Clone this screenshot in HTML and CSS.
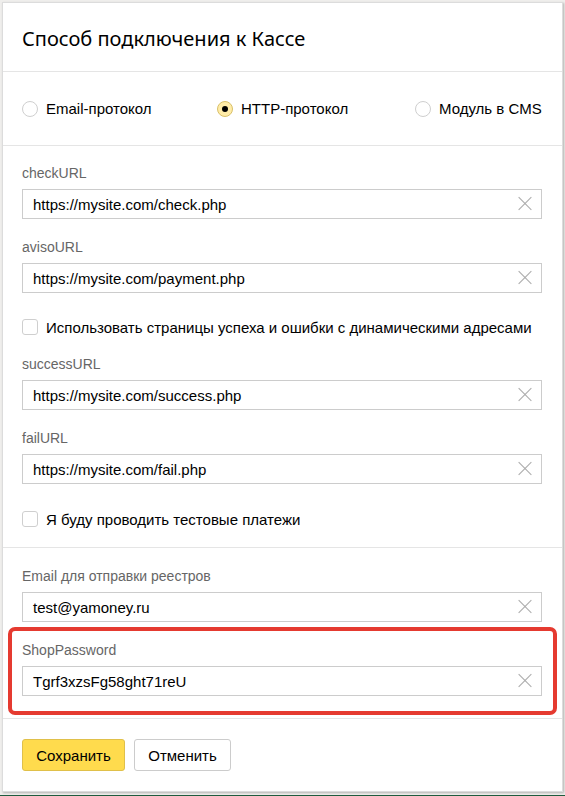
FILE: index.html
```html
<!DOCTYPE html>
<html lang="ru">
<head>
<meta charset="utf-8">
<title>Способ подключения к Кассе</title>
<link rel="stylesheet" href="styles.css">
</head>
<body>
<div class="panel">
  <div class="head"><h1 class="title">Способ подключения к Кассе</h1></div>
  <div class="radios">
    <label class="radio"><span class="rbox"></span>Email-протокол</label>
    <label class="radio"><span class="rbox on"></span>HTTP-протокол</label>
    <label class="radio"><span class="rbox"></span>Модуль в CMS</label>
  </div>
  <div class="sec sec2">
    <div class="field">
      <div class="lbl">checkURL</div>
      <div class="inp"><span class="val">https://mysite.com/check.php</span><span class="clr"></span></div>
    </div>
    <div class="field">
      <div class="lbl">avisoURL</div>
      <div class="inp"><span class="val">https://mysite.com/payment.php</span><span class="clr"></span></div>
    </div>
    <label class="check c1"><span class="cbox"></span>Использовать страницы успеха и ошибки с динамическими адресами</label>
    <div class="field">
      <div class="lbl">successURL</div>
      <div class="inp"><span class="val">https://mysite.com/success.php</span><span class="clr"></span></div>
    </div>
    <div class="field">
      <div class="lbl">failURL</div>
      <div class="inp"><span class="val">https://mysite.com/fail.php</span><span class="clr"></span></div>
    </div>
    <label class="check c2"><span class="cbox"></span>Я буду проводить тестовые платежи</label>
  </div>
  <div class="sec sec3">
    <div class="field">
      <div class="lbl">Email для отправки реестров</div>
      <div class="inp"><span class="val">test@yamoney.ru</span><span class="clr"></span></div>
    </div>
    <div class="field hl">
      <div class="mark"></div>
      <div class="lbl">ShopPassword</div>
      <div class="inp"><span class="val">Tgrf3xzsFg58ght71reU</span><span class="clr"></span></div>
    </div>
  </div>
  <div class="actions">
    <button class="btn save">Сохранить</button>
    <button class="btn cancel">Отменить</button>
  </div>
</div>
<div class="strip"></div>
</body>
</html>
```
FILE: styles.css
```css
html, body { margin: 0; padding: 0; }
body {
  background: #efeeec;
  font-family: "Liberation Sans", Arial, sans-serif;
  color: #000;
  width: 565px;
  height: 796px;
  overflow: hidden;
}
.panel {
  margin: 2px 0 0 2px;
  width: 559px;
  height: 788px;
  background: #fff;
  border: 1px solid #dcdcdc;
  box-shadow: 1px 1px 2px rgba(0,0,0,0.25);
  display: flex;
  flex-direction: column;
}
.head {
  height: 68px;
  border-bottom: 1px solid #e5e5e5;
  display: flex;
  align-items: center;
  padding-left: 19px;
}
.title {
  margin: 0;
  font-family: "Noto Sans", "Open Sans", sans-serif;
  font-weight: normal;
  font-size: 20px;
  padding-top: 3px;
}
.radios {
  height: 73px;
  border-bottom: 1px solid #e5e5e5;
  display: flex;
  align-items: center;
  padding-left: 19px;
  font-size: 15px;
}
.radio { display: flex; align-items: center; }
.radio:nth-child(1) { width: 195px; }
.radio:nth-child(2) { width: 198px; }
.rbox {
  width: 16px; height: 16px;
  box-sizing: border-box;
  border: 1px solid #cfcfcf;
  border-radius: 50%;
  margin-right: 8px;
  position: relative;
  background: #fff;
}
.rbox.on {
  background: #ffeca8;
  border-color: #d9c069;
}
.rbox.on::after {
  content: "";
  position: absolute;
  left: 4px; top: 4px;
  width: 6px; height: 6px;
  border-radius: 50%;
  background: #000;
}
.sec {
  border-bottom: 1px solid #e5e5e5;
  padding: 18px 19px 18px 19px;
}
.field { position: relative; }
.field + .field { margin-top: 19px; }
.lbl {
  font-size: 14px;
  color: #666;
  line-height: 18px;
  margin-bottom: 7px;
}
.inp {
  height: 30px;
  box-sizing: border-box;
  width: 520px;
  border: 1px solid #cccccc;
  display: flex;
  align-items: center;
  padding-left: 10px;
  font-size: 15px;
  position: relative;
}
.val { flex: 1; }
.clr {
  position: relative;
  width: 14px; height: 14px;
  margin-right: 9px;
}
.clr::before, .clr::after {
  content: "";
  position: absolute;
  left: -2px; top: 6px;
  width: 18px; height: 1px;
  background: #aaa;
  transform: rotate(45deg);
}
.clr::after { transform: rotate(-45deg); }
.check {
  display: flex;
  align-items: center;
  font-size: 15px;
  height: 20px;
}
.check.c1 { margin-top: 24px; margin-bottom: 18px; }
.check.c2 { margin-top: 25px; }
.cbox {
  width: 16px; height: 16px;
  box-sizing: border-box;
  border: 1px solid #cfcfcf;
  border-radius: 3px;
  margin-right: 8px;
  background: #fff;
}
.sec3 { padding-top: 19px; padding-bottom: 22px; }
.field.hl { margin-top: 19px; }
.mark {
  position: absolute;
  left: -14px; top: -14px;
  width: 541px; height: 80px;
  border: 4px solid #e53a30;
  border-radius: 7px;
  pointer-events: none;
}
.actions {
  padding: 20px 19px 0 19px;
  display: flex;
  gap: 9px;
}
.btn {
  height: 32px;
  box-sizing: border-box;
  border-radius: 3px;
  font-family: "Liberation Sans", Arial, sans-serif;
  font-size: 15px;
  color: #000;
  padding: 0;
}
.save {
  width: 103px;
  background: #ffdb4d;
  border: 1px solid #e0c04a;
}
.cancel {
  width: 97px;
  background: #fff;
  border: 1px solid #cccccc;
}
.strip {
  margin-top: 3px;
  height: 4px;
  background: #1f5b3e;
}
```
